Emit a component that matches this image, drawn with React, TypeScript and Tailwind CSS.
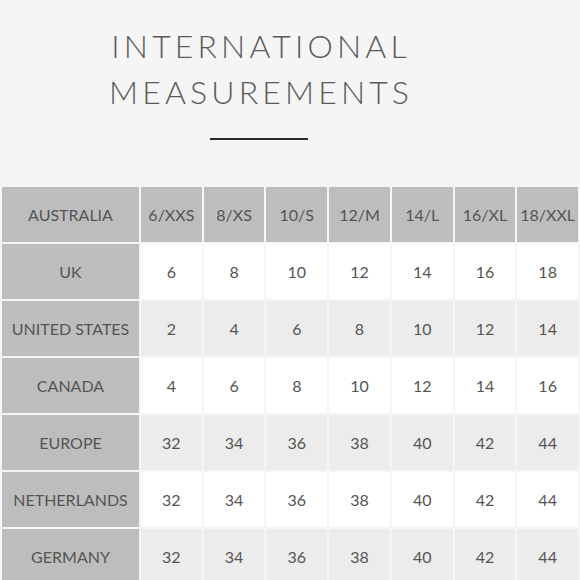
import React from 'react'

const sizes = ['6/XXS', '8/XS', '10/S', '12/M', '14/L', '16/XL', '18/XXL']

const rows: { country: string; values: number[]; tone: 'white' | 'gray' }[] = [
  { country: 'UK', values: [6, 8, 10, 12, 14, 16, 18], tone: 'white' },
  { country: 'UNITED STATES', values: [2, 4, 6, 8, 10, 12, 14], tone: 'gray' },
  { country: 'CANADA', values: [4, 6, 8, 10, 12, 14, 16], tone: 'white' },
  { country: 'EUROPE', values: [32, 34, 36, 38, 40, 42, 44], tone: 'gray' },
  { country: 'NETHERLANDS', values: [32, 34, 36, 38, 40, 42, 44], tone: 'white' },
  { country: 'GERMANY', values: [32, 34, 36, 38, 40, 42, 44], tone: 'gray' },
]

export default function App() {
  return (
    <div
      className="w-[580px] h-[580px] overflow-hidden bg-[#f5f5f5] text-[#555]"
      style={{ fontFamily: 'Lato, "Open Sans", sans-serif' }}
    >
      <div className="flex flex-col items-center pt-[23px] pr-[62px]">
        <h1 className="text-[32px] leading-[46px] font-light tracking-[0.13em] pl-[0.13em] text-center text-[#5a5a5a]">
          INTERNATIONAL
          <br />
          MEASUREMENTS
        </h1>
        <div className="mt-[23px] h-[2px] w-[98px] bg-[#2a2a2a]" />
      </div>

      <div className="mt-[47px] grid grid-cols-[137px_repeat(7,1fr)] gap-[2px] px-[2px] text-[16px]">
        <Cell tone="head">AUSTRALIA</Cell>
        {sizes.map((s) => (
          <Cell key={s} tone="head">
            {s}
          </Cell>
        ))}
        {rows.map((row) => (
          <React.Fragment key={row.country}>
            <Cell tone="head">{row.country}</Cell>
            {row.values.map((v, i) => (
              <Cell key={i} tone={row.tone}>
                {v}
              </Cell>
            ))}
          </React.Fragment>
        ))}
      </div>
    </div>
  )
}

function Cell({ tone, children }: { tone: 'head' | 'white' | 'gray'; children: React.ReactNode }) {
  const bg = tone === 'head' ? 'bg-[#bdbdbd]' : tone === 'gray' ? 'bg-[#ececec]' : 'bg-white'
  return (
    <div className={`${bg} h-[55px] flex items-center justify-center whitespace-nowrap overflow-hidden`}>
      {children}
    </div>
  )
}
